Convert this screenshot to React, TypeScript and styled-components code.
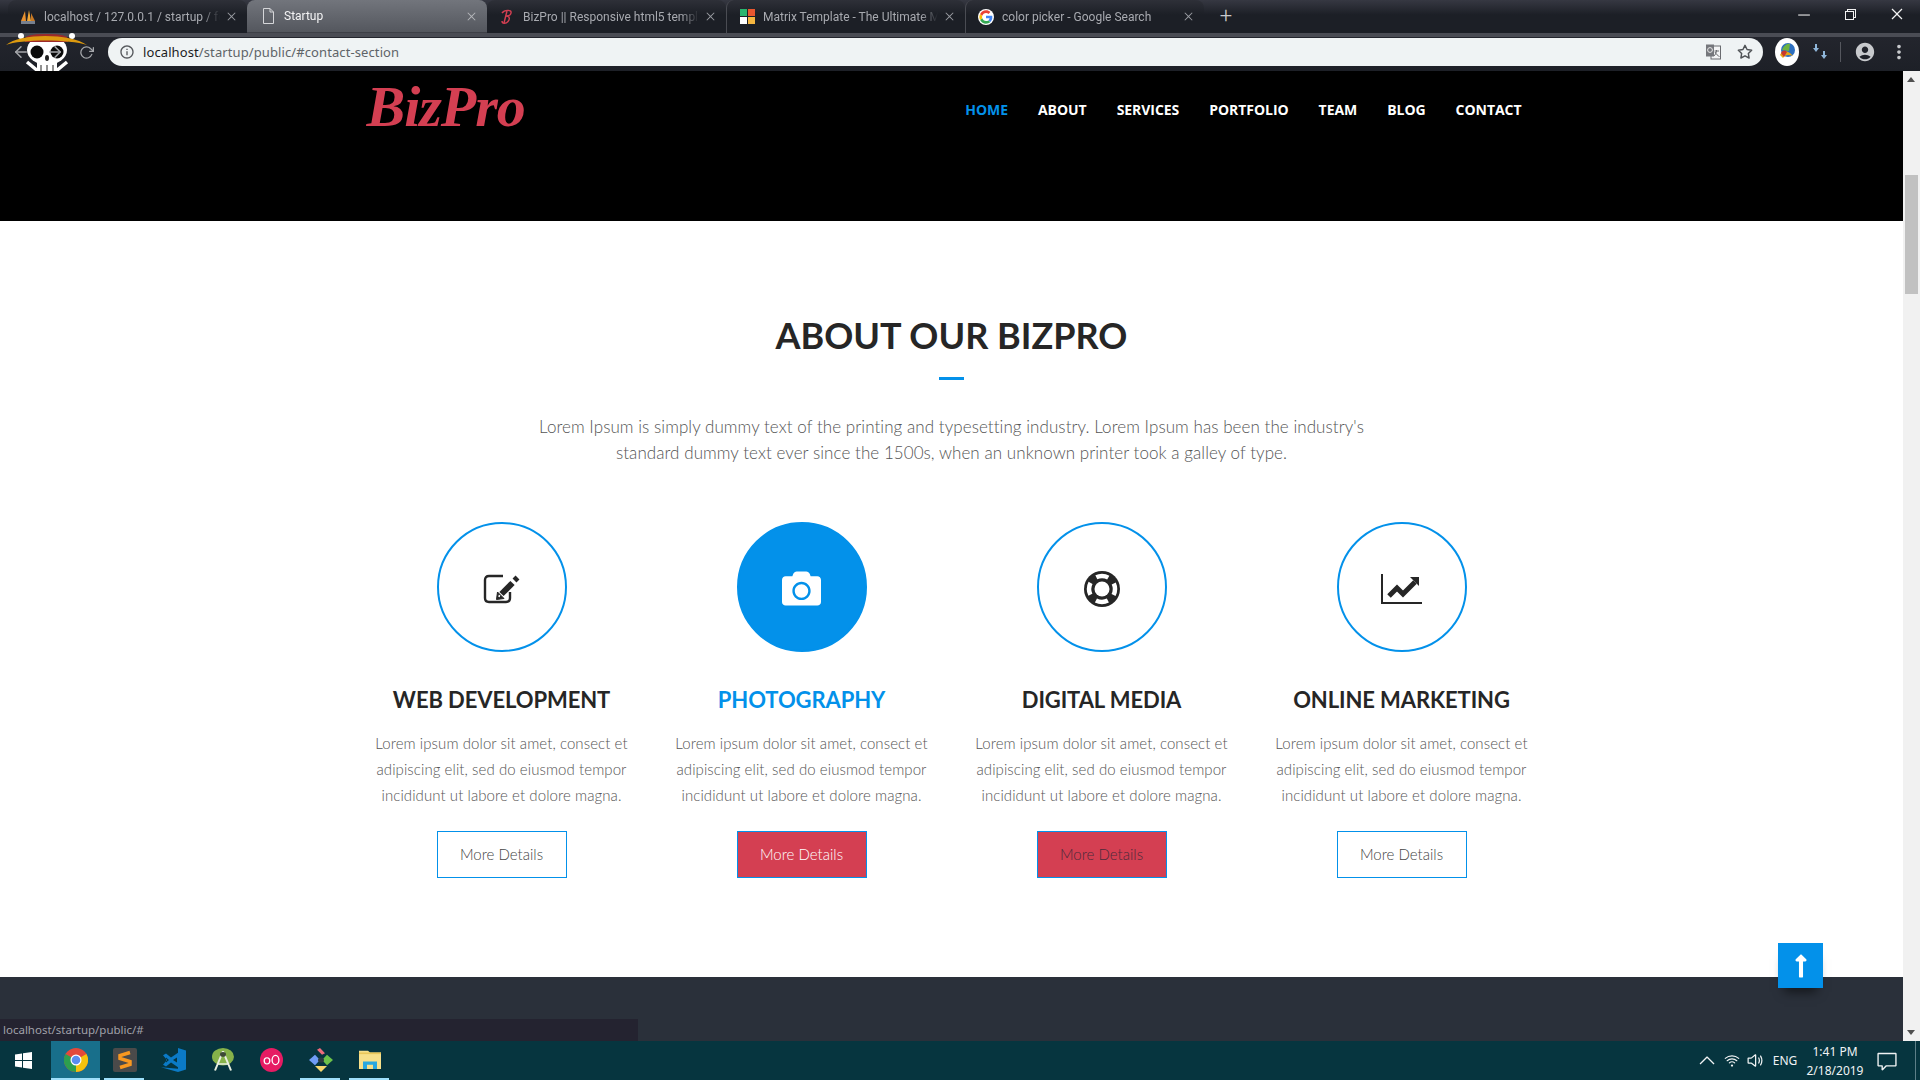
import styled, { createGlobalStyle } from "styled-components";
import { FaCamera, FaLongArrowAltUp } from "react-icons/fa";
import { FiArrowLeft, FiArrowRight, FiRotateCw, FiStar } from "react-icons/fi";
import { MdAccountCircle, MdInfoOutline, MdMoreVert } from "react-icons/md";
import { VscChevronUp, VscClose, VscChromeMinimize, VscChromeRestore, VscComment } from "react-icons/vsc";
import { IoVolumeMediumOutline, IoWifiOutline } from "react-icons/io5";

const BLUE = "#0391ea";
const RED = "#d43f52";
const INK = "#262626";

const GlobalStyle = createGlobalStyle`
  html, body {
    margin: 0;
    padding: 0;
    overflow: hidden;
  }
  * {
    box-sizing: border-box;
  }
`;

const PhpIcon = () => (
  <svg width="16" height="16" viewBox="0 0 16 16">
    <path d="M1 12 L5 2 L6 12Z" fill="#e8912f" />
    <path d="M7 12 L9 1 L11 12Z" fill="#f0a838" />
    <path d="M11 12 L11 4 L15 12Z" fill="#c97a24" />
    <rect x="1" y="12" width="14" height="3" fill="#77808f" />
  </svg>
);

const DocIcon = () => (
  <svg width="14" height="16" viewBox="0 0 14 16" fill="none" stroke="#d5d6d9" strokeWidth="1">
    <path d="M2.5 .5 H9 L12.5 4 V15.5 H2.5Z" />
    <path d="M9 .5 V4 H12.5" />
  </svg>
);

const BizIcon = () => (
  <svg width="16" height="16" viewBox="0 0 16 16" fill="none" stroke={RED} strokeWidth="1.4">
    <path d="M3 4 C5 1 13 0 12 4 C11.5 7 8 7 7 7 C11 7 11 10 9 12.5 C7 15 3 15 3 12" />
    <path d="M8 2 L5 14" />
  </svg>
);

const MatrixIcon = () => (
  <svg width="15" height="15" viewBox="0 0 15 15">
    <rect width="7" height="7" fill="#2ab56f" />
    <rect x="8" width="7" height="7" fill="#e8562f" />
    <rect y="8" width="7" height="7" fill="#ffffff" />
    <rect x="8" y="8" width="7" height="7" fill="#f5b640" />
  </svg>
);

const GoogleIcon = () => (
  <svg width="16" height="16" viewBox="0 0 48 48">
    <circle cx="24" cy="24" r="24" fill="#fff" />
    <path fill="#4285F4" d="M43 24.5c0-1.4-.1-2.700-.4-4H24v7.600h10.800c-.5 2.500-1.900 4.600-4 6l6.200 4.800C40.700 35.500 43 30.500 43 24.500z" />
    <path fill="#34A853" d="M24 44c5.400 0 9.900-1.800 13.100-4.800l-6.300-4.900c-1.700 1.200-4 1.900-6.800 1.900-5.200 0-9.600-3.500-11.200-8.200l-6.500 5C9.600 39.500 16.300 44 24 44z" />
    <path fill="#FBBC05" d="M12.800 28c-.4-1.200-.6-2.500-.6-4s.2-2.800.6-4l-6.500-5C5 17.700 4 20.800 4 24s1 6.300 2.300 9z" />
    <path fill="#EA4335" d="M24 11.800c2.900 0 5.500 1 7.600 3l5.600-5.600C33.900 6 29.400 4 24 4 16.300 4 9.600 8.500 6.300 15l6.500 5c1.600-4.700 6-8.200 11.200-8.200z" />
  </svg>
);

const StrawHatSkull = () => (
  <svg width="94" height="38" viewBox="0 0 94 38">
    <circle cx="21" cy="3" r="3" fill="#fff" />
    <circle cx="72" cy="3" r="3" fill="#fff" />
    <path d="M27 29 L38 38 M67 29 L56 38" stroke="#fff" strokeWidth="3.500" />
    <ellipse cx="47" cy="17" rx="20" ry="15" fill="#fff" />
    <rect x="37" y="28" width="20" height="10" fill="#fff" />
    <path d="M41 38 V32 M47 38 V32 M53 38 V32" stroke="#222" strokeWidth="1" />
    <circle cx="37" cy="19" r="6.500" fill="#0b0b0b" />
    <circle cx="57" cy="19" r="6.500" fill="#0b0b0b" />
    <ellipse cx="47" cy="25" rx="2" ry="3" fill="#222" />
    <path d="M25 6 Q25 1 46 1 Q68 1 68 6 V9 H25Z" fill="#9c2a2a" />
    <path d="M6 12 C20 0 70 0 87 12 C70 6 20 6 6 12Z" fill="#dd9a0f" />
  </svg>
);

const IdmIcon = () => (
  <svg width="24" height="28" viewBox="0 0 24 28">
    <ellipse cx="12" cy="14" rx="12" ry="14" fill="#fff" />
    <circle cx="13" cy="12" r="7" fill="#2d6fc0" />
    <path d="M7 12 C9 6 14 5 15 6 L14 13 Z" fill="#6db33f" />
    <path d="M5 17 C8 10 14 13 18 18 C13 16 10 17 8 20Z" fill="#e3a51a" />
    <path d="M6 15 C8 12 10 12 12 14 L9 19Z" fill="#c9382c" />
  </svg>
);

const SyncArrows = () => (
  <svg width="16" height="18" viewBox="0 0 16 18" fill="#8fb6d9">
    <path d="M3 1 H5 V5 H7 L4 9 L1 5 H3Z" />
    <path d="M11 8 H13 V12 H15 L12 16 L9 12 H11Z" />
  </svg>
);

const TranslateIcon = () => (
  <svg width="16" height="16" viewBox="0 0 16 16">
    <rect x="6" y="2" width="9.500" height="13" fill="#f3f4f5" stroke="#6a6c70" strokeWidth="1" />
    <path d="M1 0.500 H9 V12.500 H1Z" fill="#75777c" />
    <circle cx="5" cy="6" r="2.400" fill="none" stroke="#e8e8e8" strokeWidth="1" />
    <path d="M9.500 7 H14 M11.500 6 C11.500 9 10 11 9 12 M10 8 C11 10 13 12 14.500 12.500" stroke="#6a6c70" strokeWidth="1" fill="none" />
  </svg>
);

const EditIcon = () => (
  <svg width="37" height="30" viewBox="0 0 37 30" fill="none" stroke={INK}>
    <path d="M20 2 H6 Q2 2 2 6 V24 Q2 28 6 28 H23 Q27 28 27 24 V18" strokeWidth="2.400" />
    <path d="M18.500 20 L29.500 9" strokeWidth="6" />
    <path d="M31.500 6.500 L34.500 3.500" strokeWidth="5.500" />
    <path d="M13.500 25.500 L14.500 18 L21 24.500Z" fill={INK} strokeWidth="1" />
    <path d="M16 23 L16.500 21" stroke="#fff" strokeWidth="1.500" />
  </svg>
);

const LifeRingIcon = () => (
  <svg width="36" height="36" viewBox="0 0 36 36">
    <circle cx="18" cy="18" r="18" fill={INK} />
    <circle cx="18" cy="18" r="13" fill="none" stroke="#fff" strokeWidth="4.500" strokeDasharray="12.400 8" strokeDashoffset="6.200" />
    <circle cx="18" cy="18" r="7.500" fill="#fff" />
  </svg>
);

const TrendIcon = () => (
  <svg width="42" height="32" viewBox="0 0 42 32" fill={INK}>
    <rect y="1" width="2" height="30" />
    <rect y="29" width="41" height="2" />
    <path d="M8 23 L16 15 L22 21 L34 9" fill="none" stroke={INK} strokeWidth="5" />
    <path d="M29 4 H38 V13Z" />
  </svg>
);

const WindowsLogo = () => (
  <svg width="17" height="17" viewBox="0 0 17 17" fill="#fff">
    <path d="M0 2.400 L7 1.400 V8 H0Z" />
    <path d="M8 1.300 L17 0 V8 H8Z" />
    <path d="M0 9 H7 V15.600 L0 14.600Z" />
    <path d="M8 9 H17 V17 L8 15.700Z" />
  </svg>
);

const ChromeLogo = () => (
  <svg width="24" height="24" viewBox="0 0 24 24">
    <circle cx="12" cy="12" r="12" fill="#e3493b" />
    <path d="M12 12 L22.400 6 A12 12 0 0 1 12 24Z" fill="#f4c20d" />
    <path d="M12 12 L12 24 A12 12 0 0 1 1.600 6Z" fill="#2d9f4f" />
    <circle cx="12" cy="12" r="5.500" fill="#fff" />
    <circle cx="12" cy="12" r="4.300" fill="#5a8df0" />
  </svg>
);

const SublimeLogo = () => (
  <svg width="24" height="24" viewBox="0 0 24 24">
    <rect width="24" height="24" rx="2" fill="#4a4a4a" />
    <path d="M17 6 L7 9 V12 L17 15 V18 L7 21" fill="none" stroke="#f89820" strokeWidth="3.500" transform="translate(0 -1.500)" />
  </svg>
);

const VsCodeLogo = () => (
  <svg width="25" height="24" viewBox="0 0 25 30" preserveAspectRatio="none" fill="#0b7ac6">
    <path d="M17 0 L25 3 V27 L17 30 L0 24 L17 26Z" />
    <path d="M2 9 L5 7 L10 12 L17 6 V24 L10 18 L5 23 L2 21 L6 15Z M5 12 V18 L8 15Z M12 15 L16 18 V12Z" />
  </svg>
);

const AndroidLogo = () => (
  <svg width="22" height="24" viewBox="0 0 22 30" preserveAspectRatio="none">
    <circle cx="11" cy="11" r="11" fill="#86b24a" />
    <path d="M11 4 L3 28 M11 4 L19 28 M6 20 H16" stroke="#e8efe0" strokeWidth="2" fill="none" />
    <circle cx="11" cy="8" r="3" fill="#3d4a36" />
  </svg>
);

const OoLogo = () => (
  <svg width="23" height="24" viewBox="0 0 23 28" preserveAspectRatio="none">
    <ellipse cx="11.500" cy="14" rx="11.500" ry="14" fill="#e61b63" />
    <ellipse cx="7" cy="15" rx="2.800" ry="3.600" fill="none" stroke="#fff" strokeWidth="1.300" />
    <ellipse cx="15.500" cy="14" rx="3.400" ry="5.400" fill="none" stroke="#fff" strokeWidth="1.300" />
  </svg>
);

const GitKrakenLogo = () => (
  <svg width="24" height="24" viewBox="0 0 24 28" preserveAspectRatio="none">
    <path d="M0 14 L6 8 L11 14 L6 20Z" fill="#6f9cf5" />
    <path d="M13 14 L18 8 L24 14 L18 20Z" fill="#6cc24a" />
    <path d="M12 28 L6 21 L18 21Z" fill="#f5d76e" />
    <path d="M8 2 L11 0 L16 6 L13 8Z" fill="#ee6c7c" />
    <circle cx="12" cy="14" r="3" fill="#2a3a40" />
  </svg>
);

const ExplorerLogo = () => (
  <svg width="22" height="19" viewBox="0 0 22 23" preserveAspectRatio="none">
    <path d="M0 1 H9 L11 3 H22 V23 H0Z" fill="#f7e08a" />
    <rect y="3" width="22" height="2" fill="#e9c75a" />
    <path d="M4 23 V14 H18 V23 H14 V18 H8 V23Z" fill="#29a8e0" />
  </svg>
);

const tabs = [
  { icon: <PhpIcon />, title: "localhost / 127.0.0.1 / startup / fo" },
  { icon: <DocIcon />, title: "Startup", active: true },
  { icon: <BizIcon />, title: "BizPro || Responsive html5 templ" },
  { icon: <MatrixIcon />, title: "Matrix Template - The Ultimate M" },
  { icon: <GoogleIcon />, title: "color picker - Google Search" },
];

const navItems = ["HOME", "ABOUT", "SERVICES", "PORTFOLIO", "TEAM", "BLOG", "CONTACT"];

const services = [
  { icon: <EditIcon />, title: "WEB DEVELOPMENT" },
  { icon: <FaCamera size={39} />, title: "PHOTOGRAPHY", highlight: true },
  { icon: <LifeRingIcon />, title: "DIGITAL MEDIA", redButton: true },
  { icon: <TrendIcon />, title: "ONLINE MARKETING" },
];

const taskApps = [
  { logo: <ChromeLogo />, active: true, running: true },
  { logo: <SublimeLogo />, running: true },
  { logo: <VsCodeLogo /> },
  { logo: <AndroidLogo /> },
  { logo: <OoLogo /> },
  { logo: <GitKrakenLogo />, running: true },
  { logo: <ExplorerLogo />, running: true },
];

export default function App() {
  return (
    <>
      <GlobalStyle />
      <Screen>
        <TabStrip>
          {tabs.map((tab, i) => (
            <Tab key={tab.title} $active={tab.active} $divider={i >= 3}>
              <TabIcon>{tab.icon}</TabIcon>
              <TabTitle $active={tab.active}>{tab.title}</TabTitle>
              <TabClose $active={tab.active}>
                <VscClose size={15} />
              </TabClose>
            </Tab>
          ))}
          <NewTab>+</NewTab>
          <WindowControls>
            <VscChromeMinimize size={17} />
            <VscChromeRestore size={16} />
            <VscClose size={20} />
          </WindowControls>
        </TabStrip>

        <Toolbar>
          <SkullOverlay>
            <StrawHatSkull />
          </SkullOverlay>
          <NavButtons>
            <FiArrowLeft size={18} />
            <FiArrowRight size={18} />
            <FiRotateCw size={15} />
          </NavButtons>
          <Omnibox>
            <MdInfoOutline size={16} color="#55585c" />
            <UrlText>
              <b>localhost</b>/startup/public/#contact-section
            </UrlText>
            <OmniboxRight>
              <TranslateIcon />
              <FiStar size={16} color="#505357" strokeWidth={2.2} />
            </OmniboxRight>
          </Omnibox>
          <ToolbarRight>
            <IdmIcon />
            <SyncArrows />
            <ToolbarDivider />
            <MdAccountCircle size={22} color="#c8cacd" />
            <MdMoreVert size={22} color="#c8cacd" />
          </ToolbarRight>
        </Toolbar>

        <Viewport>
          <Page>
            <Header>
              <HeaderInner>
                <Logo>BizPro</Logo>
                <Nav>
                  {navItems.map((item) => (
                    <NavLink key={item} $current={item === "HOME"}>
                      {item}
                    </NavLink>
                  ))}
                </Nav>
              </HeaderInner>
            </Header>

            <AboutSection>
              <SectionTitle>ABOUT OUR BIZPRO</SectionTitle>
              <TitleRule />
              <Intro>
                Lorem Ipsum is simply dummy text of the printing and typesetting industry. Lorem Ipsum has been the
                industry's standard dummy text ever since the 1500s, when an unknown printer took a galley of type.
              </Intro>
              <ServiceGrid>
                {services.map((service) => (
                  <ServiceCard key={service.title}>
                    <IconCircle $filled={service.highlight}>{service.icon}</IconCircle>
                    <ServiceTitle $highlight={service.highlight}>{service.title}</ServiceTitle>
                    <ServiceText>
                      Lorem ipsum dolor sit amet, consect et adipiscing elit, sed do eiusmod tempor incididunt ut
                      labore et dolore magna.
                    </ServiceText>
                    <DetailsButton $solid={service.highlight} $muted={service.redButton}>
                      More Details
                    </DetailsButton>
                  </ServiceCard>
                ))}
              </ServiceGrid>
            </AboutSection>

            <Footer />
            <StatusBubble>localhost/startup/public/#</StatusBubble>
            <ScrollTop>
              <FaLongArrowAltUp size={26} />
            </ScrollTop>
          </Page>
          <Scrollbar>
            <ScrollArrow $up />
            <ScrollThumb />
            <ScrollArrow />
          </Scrollbar>
        </Viewport>

        <Taskbar>
          <StartButton>
            <WindowsLogo />
          </StartButton>
          {taskApps.map((app, i) => (
            <TaskApp key={i} $active={app.active} $running={app.running}>
              {app.logo}
            </TaskApp>
          ))}
          <Tray>
            <TraySlot $width={24}>
              <VscChevronUp size={24} />
            </TraySlot>
            <TraySlot $width={26}>
              <IoWifiOutline size={18} />
            </TraySlot>
            <TraySlot $width={20}>
              <IoVolumeMediumOutline size={21} />
            </TraySlot>
            <TraySlot $width={40}>ENG</TraySlot>
            <Clock>
              <span>1:41 PM</span>
              <span>2/18/2019</span>
            </Clock>
            <TraySlot $width={44}>
              <VscComment size={22} />
            </TraySlot>
            <ShowDesktop />
          </Tray>
        </Taskbar>
      </Screen>
    </>
  );
}

const Screen = styled.div`
  width: 1920px;
  height: 1080px;
  display: flex;
  flex-direction: column;
  overflow: hidden;
  background: #fff;
`;

const TabStrip = styled.div`
  height: 33px;
  flex: none;
  display: flex;
  padding-left: 8px;
  background: linear-gradient(#363842, #1c1f26 45%, #1c1f26);
  font-family: Roboto, sans-serif;
`;

const Tab = styled.div<{ $active?: boolean; $divider?: boolean }>`
  width: ${({ $active }) => ($active ? "240px" : "239px")};
  display: flex;
  align-items: center;
  padding: 0 8px 0 ${({ $active }) => ($active ? "13px" : "12px")};
  border-radius: 8px 8px 0 0;
  background: ${({ $active }) => ($active ? "linear-gradient(#72757c, #54575e)" : "linear-gradient(#2e3038, #1c1f26 45%)")};
  border-bottom: ${({ $active }) => ($active ? "1px solid #3e4047" : "none")};
  border-left: ${({ $divider }) => ($divider ? "1px solid #4a4c53" : "none")};
`;

const TabIcon = styled.span`
  width: 16px;
  height: 16px;
  flex: none;
  display: flex;
  align-items: center;
  justify-content: center;
`;

const TabTitle = styled.span<{ $active?: boolean }>`
  flex: 1;
  margin-left: 8px;
  font-size: 12px;
  white-space: nowrap;
  overflow: hidden;
  color: ${({ $active }) => ($active ? "#f4f4f5" : "#a8aab0")};
  mask-image: linear-gradient(to right, #000 90%, transparent);
`;

const TabClose = styled.span<{ $active?: boolean }>`
  flex: none;
  display: flex;
  margin-left: 4px;
  color: ${({ $active }) => ($active ? "#b5b7bb" : "#9a9ca2")};
`;

const NewTab = styled.div`
  width: 44px;
  text-align: center;
  color: #c8c9cc;
  font-size: 22px;
  line-height: 32px;
  font-weight: 300;
`;

const WindowControls = styled.div`
  margin-left: auto;
  width: 140px;
  display: flex;
  align-items: center;
  justify-content: space-between;
  padding: 0 13px 5px 15px;
  color: #f2f2f2;
`;

const Toolbar = styled.div`
  position: relative;
  height: 38px;
  flex: none;
  display: flex;
  align-items: center;
  background: linear-gradient(#4a4c54 0, #4a4c54 4px, #23252d 4px, #1d2027);
`;

const SkullOverlay = styled.div`
  position: absolute;
  left: 0;
  top: 0;
  height: 38px;
`;

const NavButtons = styled.div`
  position: relative;
  width: 108px;
  flex: none;
  display: flex;
  align-items: center;
  justify-content: space-between;
  padding: 0 14px 0 12px;
  color: #a5a7ab;
`;

const Omnibox = styled.div`
  width: 1655px;
  height: 28px;
  flex: none;
  display: flex;
  align-items: center;
  padding: 0 10px 0 11px;
  border-radius: 14px;
  background: #eff3f4;
  font-family: "Noto Sans", sans-serif;
`;

const UrlText = styled.span`
  margin-left: 8px;
  font-size: 13px;
  letter-spacing: 0.1px;
  color: #5e6468;

  b {
    font-weight: 400;
    color: #1c1c1e;
  }
`;

const OmniboxRight = styled.div`
  margin-left: auto;
  width: 48px;
  display: flex;
  align-items: center;
  justify-content: space-between;
`;

const ToolbarRight = styled.div`
  flex: 1;
  display: flex;
  align-items: center;
  padding: 0 10px 0 12px;
  justify-content: space-between;
`;

const ToolbarDivider = styled.span`
  width: 1px;
  height: 20px;
  background: #55575e;
`;

const Viewport = styled.div`
  flex: 1;
  min-height: 0;
  display: flex;
`;

const Page = styled.div`
  position: relative;
  flex: 1;
  display: flex;
  flex-direction: column;
  overflow: hidden;
`;

const Header = styled.header`
  height: 150px;
  flex: none;
  background: #000;
`;

const HeaderInner = styled.div`
  width: 1170px;
  margin: 0 auto;
  display: flex;
  justify-content: space-between;
  align-items: flex-start;
`;

const Logo = styled.div`
  margin-top: 5px;
  font-family: "Liberation Serif", serif;
  font-style: italic;
  font-weight: 700;
  font-size: 58px;
  line-height: 62px;
  letter-spacing: -1px;
  color: ${RED};
`;

const Nav = styled.nav`
  display: flex;
  padding-top: 28px;
`;

const NavLink = styled.a<{ $current?: boolean }>`
  padding: 0 15px;
  font-family: "Open Sans", sans-serif;
  font-size: 14px;
  line-height: 22px;
  font-weight: 700;
  letter-spacing: -0.05px;
  color: ${({ $current }) => ($current ? BLUE : "#fff")};
`;

const AboutSection = styled.section`
  height: 756px;
  flex: none;
  padding-top: 92px;
  display: flex;
  flex-direction: column;
  align-items: center;
  font-family: "Lato", sans-serif;
`;

const SectionTitle = styled.h2`
  margin: 0;
  font-size: 36px;
  line-height: 44px;
  font-weight: 700;
  color: ${INK};
`;

const TitleRule = styled.span`
  width: 25px;
  height: 3px;
  margin-top: 20px;
  background: ${BLUE};
`;

const Intro = styled.p`
  width: 880px;
  margin: 34px 0 0;
  text-align: center;
  font-size: 17px;
  line-height: 26px;
  font-weight: 300;
  letter-spacing: 0.06px;
  color: #555;
`;

const ServiceGrid = styled.div`
  width: 1200px;
  margin-top: 56px;
  display: grid;
  grid-template-columns: repeat(4, 300px);
`;

const ServiceCard = styled.div`
  display: flex;
  flex-direction: column;
  align-items: center;
`;

const IconCircle = styled.div<{ $filled?: boolean }>`
  width: 130px;
  height: 130px;
  padding-top: 3px;
  display: flex;
  align-items: center;
  justify-content: center;
  border-radius: 50%;
  border: 2px solid ${BLUE};
  background: ${({ $filled }) => ($filled ? BLUE : "#fff")};
  color: ${({ $filled }) => ($filled ? "#fff" : INK)};
`;

const ServiceTitle = styled.h3<{ $highlight?: boolean }>`
  margin: 33px 0 0;
  font-size: 22px;
  line-height: 30px;
  font-weight: 700;
  letter-spacing: -0.1px;
  color: ${({ $highlight }) => ($highlight ? BLUE : INK)};
`;

const ServiceText = styled.p`
  width: 270px;
  margin: 15px 0 0;
  text-align: center;
  font-size: 15px;
  line-height: 26px;
  font-weight: 300;
  letter-spacing: 0.08px;
  color: #555;
`;

const DetailsButton = styled.a<{ $solid?: boolean; $muted?: boolean }>`
  width: 130px;
  height: 47px;
  margin-top: 23px;
  padding-bottom: 2px;
  display: flex;
  align-items: center;
  justify-content: center;
  border: 1px solid ${BLUE};
  font-size: 15px;
  font-weight: 300;
  background: ${({ $solid, $muted }) => ($solid || $muted ? RED : "#fff")};
  color: ${({ $solid, $muted }) => ($solid ? "#fff" : $muted ? "#4a2a3a" : "#444")};
`;

const Footer = styled.footer`
  flex: 1;
  background: #2a303a;
`;

const StatusBubble = styled.div`
  position: absolute;
  left: 0;
  bottom: 0;
  width: 638px;
  height: 22px;
  padding: 0 3px;
  background: #242330;
  color: #a0a1a9;
  font-family: "Noto Sans", sans-serif;
  font-size: 11.5px;
  line-height: 22px;
`;

const ScrollTop = styled.a`
  position: absolute;
  left: 1778px;
  top: 872px;
  width: 45px;
  height: 45px;
  display: flex;
  align-items: center;
  justify-content: center;
  background: ${BLUE};
  color: #fff;
  box-shadow: 0 10px 10px -6px rgba(0, 0, 0, 0.55);
`;

const Scrollbar = styled.div`
  width: 17px;
  flex: none;
  display: flex;
  flex-direction: column;
  background: #f1f1f1;
`;

const ScrollArrow = styled.span<{ $up?: boolean }>`
  width: 0;
  height: 0;
  margin: ${({ $up }) => ($up ? "6px 4px 6px" : "auto 4px 6px")};
  border-left: 4.5px solid transparent;
  border-right: 4.5px solid transparent;
  ${({ $up }) => ($up ? "border-bottom: 5px solid #505050;" : "border-top: 5px solid #505050;")}
`;

const ScrollThumb = styled.span`
  width: 13px;
  height: 119px;
  margin: 87px 2px 0;
  background: #c1c1c1;
`;

const Taskbar = styled.div`
  height: 39px;
  flex: none;
  display: flex;
  align-items: stretch;
  background: #06353f;
`;

const StartButton = styled.div`
  width: 51px;
  padding-left: 15px;
  display: flex;
  align-items: center;
`;

const TaskApp = styled.div<{ $active?: boolean; $running?: boolean }>`
  position: relative;
  width: 49px;
  padding-bottom: 2px;
  display: flex;
  align-items: center;
  justify-content: center;
  background: ${({ $active }) => ($active ? "#186f8b" : "transparent")};

  &::after {
    content: "";
    position: absolute;
    bottom: 0;
    height: 2px;
    left: ${({ $active }) => ($active ? "0" : "4px")};
    right: ${({ $active }) => ($active ? "0" : "5px")};
    background: ${({ $running }) => ($running ? "#9fe0fb" : "transparent")};
  }
`;

const Tray = styled.div`
  margin-left: auto;
  width: 225px;
  display: flex;
  align-items: center;
  color: #f0f3f4;
  font-family: "Noto Sans", sans-serif;
`;

const TraySlot = styled.div<{ $width: number }>`
  width: ${({ $width }) => $width}px;
  flex: none;
  display: flex;
  align-items: center;
  justify-content: center;
  font-size: 12px;
`;

const Clock = styled.div`
  width: 60px;
  flex: none;
  display: flex;
  flex-direction: column;
  align-items: center;
  font-size: 12px;
  line-height: 19px;
`;

const ShowDesktop = styled.span`
  width: 1px;
  height: 100%;
  margin-left: 6px;
  background: #5d7f88;
`;
